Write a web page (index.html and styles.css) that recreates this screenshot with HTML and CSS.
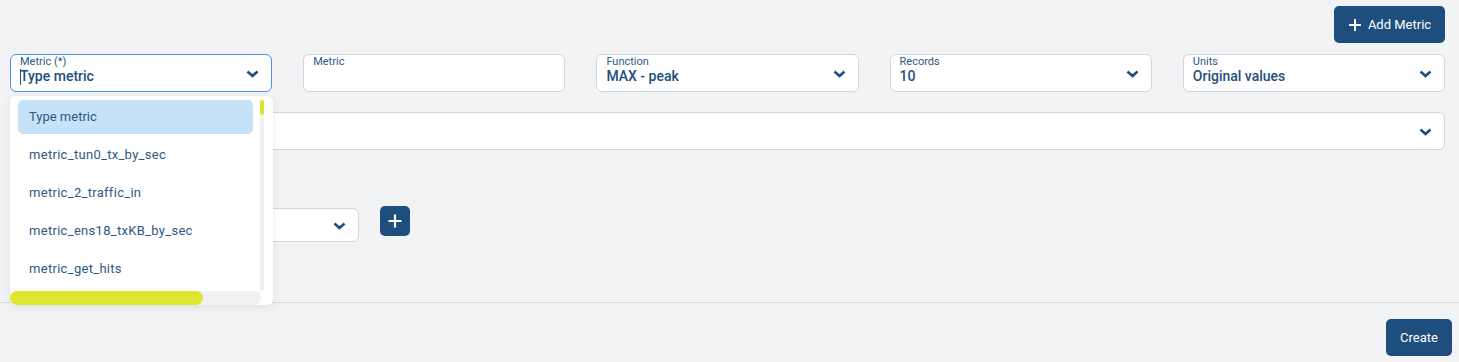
FILE: index.html
```html
<!DOCTYPE html>
<html lang="en">
<head>
    <meta charset="UTF-8">
    <title>New widget</title>
    <link rel="stylesheet" href="styles.css">
</head>
<body>

    <div class="toolbar">
        <button class="btn btn-add">
            <svg width="14" height="14" viewBox="0 0 14 14"><path d="M7 1v12M1 7h12" stroke="#fff" stroke-width="2"/></svg>
            Add Metric
        </button>
    </div>

    <div class="fields">
        <div class="field focused">
            <span class="label">Metric (*)</span>
            <span class="value"><i class="caret"></i>Type metric</span>
            <svg class="chevron" width="13" height="8" viewBox="0 0 13 8"><path d="M1.5 1.5L6.5 6l5-4.5" fill="none" stroke="#1e4e7e" stroke-width="2.6"/></svg>
        </div>
        <div class="field">
            <span class="label">Metric</span>
            <span class="value"></span>
        </div>
        <div class="field">
            <span class="label">Function</span>
            <span class="value">MAX - peak</span>
            <svg class="chevron" width="13" height="8" viewBox="0 0 13 8"><path d="M1.5 1.5L6.5 6l5-4.5" fill="none" stroke="#1e4e7e" stroke-width="2.6"/></svg>
        </div>
        <div class="field">
            <span class="label">Records</span>
            <span class="value">10</span>
            <svg class="chevron" width="13" height="8" viewBox="0 0 13 8"><path d="M1.5 1.5L6.5 6l5-4.5" fill="none" stroke="#1e4e7e" stroke-width="2.6"/></svg>
        </div>
        <div class="field">
            <span class="label">Units</span>
            <span class="value">Original values</span>
            <svg class="chevron" width="13" height="8" viewBox="0 0 13 8"><path d="M1.5 1.5L6.5 6l5-4.5" fill="none" stroke="#1e4e7e" stroke-width="2.6"/></svg>
        </div>
    </div>

    <div class="field wide">
        <svg class="chevron" width="13" height="8" viewBox="0 0 13 8"><path d="M1.5 1.5L6.5 6l5-4.5" fill="none" stroke="#1e4e7e" stroke-width="2.6"/></svg>
    </div>

    <div class="filter-label">Filters</div>

    <div class="filter-row">
        <div class="field small">
            <svg class="chevron" width="13" height="8" viewBox="0 0 13 8"><path d="M1.5 1.5L6.5 6l5-4.5" fill="none" stroke="#1e4e7e" stroke-width="2.6"/></svg>
        </div>
        <button class="btn btn-plus">
            <svg width="14" height="14" viewBox="0 0 14 14"><path d="M7 0.5v13M0.5 7h13" stroke="#fff" stroke-width="2.2"/></svg>
        </button>
    </div>

    <div class="footer">
        <button class="btn btn-create">Create</button>
    </div>

    <!-- Open metric list -->
    <div class="menu">
        <ul class="options">
            <li class="active">Type metric</li>
            <li>metric_tun0_tx_by_sec</li>
            <li>metric_2_traffic_in</li>
            <li>metric_ens18_txKB_by_sec</li>
            <li>metric_get_hits</li>
        </ul>
        <div class="vscroll"><div class="vthumb"></div></div>
        <div class="hscroll"><div class="hthumb"></div></div>
    </div>

</body>
</html>
```

FILE: styles.css
```css
body {
    margin: 0;
    background-color: #f2f3f5;
    font-family: Roboto, "Liberation Sans", sans-serif;
    color: #1e4e7e;
    position: relative;
    height: 362px;
    overflow: hidden;
}

.btn {
    background-color: #1e4e7e;
    color: #fff;
    border: none;
    border-radius: 5px;
    font-family: Roboto, "Liberation Sans", sans-serif;
    cursor: pointer;
    display: flex;
    align-items: center;
    justify-content: center;
}

/* Top bar */
.toolbar {
    display: flex;
    justify-content: flex-end;
    padding: 6px 14px 0 10px;
}

.btn-add {
    width: 111px;
    height: 37px;
    font-size: 13px;
    gap: 6px;
}

/* Field rows */
.fields {
    display: grid;
    grid-template-columns: repeat(5, 1fr);
    gap: 31px;
    margin: 11px 14px 0 10px;
}

.field {
    position: relative;
    height: 38px;
    box-sizing: border-box;
    background: #fff;
    border: 1px solid #d3d5d8;
    border-radius: 6px;
    padding: 1px 9px 0;
    display: flex;
    flex-direction: column;
}

.field.focused {
    border-color: #4b8ef1;
}

.field .label {
    font-size: 11px;
    line-height: 12px;
    color: #2b5984;
}

.field .value {
    font-size: 14px;
    font-weight: 500;
    line-height: 16px;
}

.caret {
    display: inline-block;
    width: 1px;
    height: 16px;
    background: #1e4e7e;
    vertical-align: -4px;
    margin-right: -1px;
}

.chevron {
    position: absolute;
    right: 12px;
    top: 15px;
}

.wide {
    margin: 20px 14px 0 10px;
}

.filter-label {
    margin: 18px 0 0 10px;
    height: 20px;
    font-size: 14px;
    font-weight: 500;
}

.filter-row {
    display: flex;
    align-items: flex-start;
    gap: 21px;
    margin: 18px 0 0 10px;
}

.field.small {
    width: 349px;
    height: 34px;
    margin-top: 2px;
}

.field.small .chevron {
    top: 13px;
}

.btn-plus {
    width: 30px;
    height: 30px;
    padding: 0;
}

.footer {
    margin-top: 60px;
    border-top: 1px solid #d9dadd;
    display: flex;
    justify-content: flex-end;
    padding: 16px 7px 0 0;
}

.btn-create {
    width: 66px;
    height: 37px;
    font-size: 13px;
}

/* Dropdown list over the form */
.menu {
    position: absolute;
    left: 10px;
    top: 96px;
    width: 263px;
    height: 209px;
    background: #fff;
    border-radius: 6px;
    box-shadow: 0 2px 10px rgba(0, 0, 0, 0.08);
    overflow: hidden;
}

.options {
    list-style: none;
    margin: 0;
    padding: 4px 0 0 8px;
    width: 235px;
}

.options li {
    height: 34px;
    line-height: 34px;
    padding-left: 11px;
    margin-bottom: 4px;
    font-size: 13px;
    letter-spacing: 0.3px;
    border-radius: 5px;
    color: #2b5984;
}

.options li.active {
    background: #c6e2f8;
    letter-spacing: 0;
}

.vscroll {
    position: absolute;
    left: 250px;
    top: 4px;
    width: 4px;
    height: 190px;
    background: #f0f1f3;
}

.vthumb {
    height: 15px;
    background: #dfe42f;
    border-radius: 2px;
}

.hscroll {
    position: absolute;
    left: 0;
    top: 195px;
    width: 251px;
    height: 14px;
    background: #f0f1f3;
    border-radius: 7px;
}

.hthumb {
    width: 193px;
    height: 14px;
    background: #dfe42f;
    border-radius: 7px;
}
```
